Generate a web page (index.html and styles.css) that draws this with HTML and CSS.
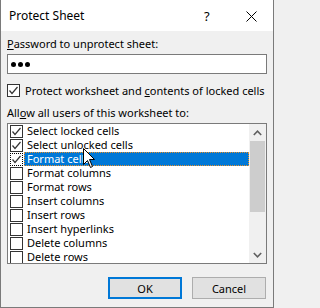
FILE: index.html
```html
<!DOCTYPE html>
<html>
<head>
<meta charset="utf-8">
<link rel="stylesheet" href="styles.css">
</head>
<body>
<div class="dialog">
  <div class="titlebar">
    <span class="title">Protect Sheet</span>
    <span class="help">?</span>
    <span class="close"><svg width="11" height="11" viewBox="0 0 11 11"><path d="M0.5 0.5 L10.5 10.5 M10.5 0.5 L0.5 10.5" stroke="#000" stroke-width="1" fill="none"/></svg></span>
  </div>
  <div class="body">
    <div class="label"><u>P</u>assword to unprotect sheet:</div>
    <div class="input"><span class="dot"></span><span class="dot"></span><span class="dot"></span></div>
    <div class="check-row">
      <span class="cb"><svg width="11" height="11" viewBox="0 0 11 11"><polyline points="1.5,5.5 4,8.5 9.5,2" stroke="#333" stroke-width="1.2" fill="none"/></svg></span>
      <span>Protect worksheet and <u>c</u>ontents of locked cells</span>
    </div>
    <div class="label label2">All<u>o</u>w all users of this worksheet to:</div>
    <div class="listbox">
      <div class="items">
        <div class="row"><span class="cb"><svg width="11" height="11" viewBox="0 0 11 11"><polyline points="1.5,5.5 4,8.5 9.5,2" stroke="#333" stroke-width="1.2" fill="none"/></svg></span><span class="text">Select locked cells</span></div>
        <div class="row"><span class="cb"><svg width="11" height="11" viewBox="0 0 11 11"><polyline points="1.5,5.5 4,8.5 9.5,2" stroke="#333" stroke-width="1.2" fill="none"/></svg></span><span class="text">Select unlocked cells</span></div>
        <div class="row selected"><span class="cb focus"><svg width="11" height="11" viewBox="0 0 11 11"><polyline points="1.5,5.5 4,8.5 9.5,2" stroke="#333" stroke-width="1.2" fill="none"/></svg></span><span class="text">Format cells</span></div>
        <div class="row"><span class="cb"></span><span class="text">Format columns</span></div>
        <div class="row"><span class="cb"></span><span class="text">Format rows</span></div>
        <div class="row"><span class="cb"></span><span class="text">Insert columns</span></div>
        <div class="row"><span class="cb"></span><span class="text">Insert rows</span></div>
        <div class="row"><span class="cb"></span><span class="text">Insert hyperlinks</span></div>
        <div class="row"><span class="cb"></span><span class="text">Delete columns</span></div>
        <div class="row"><span class="cb"></span><span class="text">Delete rows</span></div>
      </div>
      <div class="scrollbar">
        <div class="sb-btn"><svg width="9" height="6" viewBox="0 0 9 6"><polyline points="0.8,5 4.5,1.2 8.2,5" stroke="#606060" stroke-width="1.6" fill="none"/></svg></div>
        <div class="thumb"></div>
        <div class="track"></div>
        <div class="sb-btn"><svg width="9" height="6" viewBox="0 0 9 6"><polyline points="0.8,1 4.5,4.8 8.2,1" stroke="#606060" stroke-width="1.6" fill="none"/></svg></div>
      </div>
    </div>
    <div class="buttons">
      <button class="btn default">OK</button>
      <button class="btn">Cancel</button>
    </div>
  </div>
  <svg class="cursor" width="13" height="21" viewBox="0 0 13 21"><path d="M0.5 0.5 L0.5 16.5 L4.5 12.5 L7.5 19.5 L9.5 18.5 L6.5 11.5 L11.5 11.5 Z" fill="#fff" stroke="#000" stroke-width="1"/></svg>
</div>
</body>
</html>
```

FILE: styles.css
```css
html, body {
  margin: 0;
  padding: 0;
}
body {
  width: 274px;
  height: 308px;
  overflow: hidden;
  background: #f0f0f0;
  font-family: "Noto Sans", "Open Sans", sans-serif;
  font-size: 11px;
  color: #000;
  white-space: nowrap;
}
.dialog {
  position: relative;
  box-sizing: border-box;
  width: 274px;
  height: 308px;
  border-left: 1px solid #7a7a7a;
  border-right: 1px solid #7a7a7a;
  border-bottom: 1px solid #7a7a7a;
  background: #f0f0f0;
  display: flex;
  flex-direction: column;
}
.titlebar {
  height: 31px;
  background: #fff;
  display: flex;
  align-items: center;
  padding-left: 8px;
  flex: none;
}
.title {
  flex: 1;
  font-size: 12px;
}
.help {
  width: 12px;
  margin-right: 30px;
  font-size: 13px;
}
.close {
  display: flex;
  margin-right: 16px;
  margin-top: 1px;
}
.body {
  padding: 0 6px;
  display: flex;
  flex-direction: column;
}
.label {
  line-height: 15px;
  margin-top: 5px;
}
.label2 {
  margin-top: 7px;
}
.input {
  margin-top: 3px;
  height: 20px;
  box-sizing: border-box;
  border: 1px solid #7a7a7a;
  background: #fff;
  display: flex;
  align-items: center;
  gap: 2px;
  padding-left: 3px;
  padding-top: 1px;
}
.dot {
  width: 5px;
  height: 5px;
  border-radius: 50%;
  background: #000;
}
.check-row {
  margin-top: 9px;
  height: 15px;
  display: flex;
  align-items: center;
  gap: 5px;
}
.cb {
  width: 13px;
  height: 13px;
  box-sizing: border-box;
  border: 1px solid #333;
  background: #fff;
  display: flex;
  flex: none;
}
.cb.focus {
  border-style: dotted;
  border-color: #000;
}
.listbox {
  margin-top: 3px;
  height: 141px;
  box-sizing: border-box;
  border: 1px solid #7a7a7a;
  background: #fff;
  display: flex;
}
.items {
  flex: 1;
  overflow: hidden;
}
.row {
  height: 14px;
  display: flex;
  align-items: center;
  padding-left: 2px;
}
.row .text {
  margin-left: 1px;
  padding-left: 3px;
  line-height: 14px;
  height: 14px;
  flex: 1;
  box-sizing: border-box;
}
.row.selected .text {
  background: #0078d7;
  color: #fff;
  border: 1px dotted #e8902a;
  padding-left: 2px;
  line-height: 12px;
}
.scrollbar {
  width: 17px;
  background: #f0f0f0;
  display: flex;
  flex-direction: column;
  flex: none;
}
.sb-btn {
  height: 17px;
  display: flex;
  align-items: center;
  justify-content: center;
  flex: none;
}
.thumb {
  height: 71px;
  margin: 0 1px;
  background: #cdcdcd;
  flex: none;
}
.track {
  flex: 1;
}
.buttons {
  margin-top: 13px;
  display: flex;
  justify-content: flex-end;
  gap: 10px;
  padding-right: 1px;
}
.btn {
  width: 74px;
  height: 22px;
  box-sizing: border-box;
  border: 1px solid #adadad;
  background: #e1e1e1;
  font-family: "Noto Sans", "Open Sans", sans-serif;
  font-size: 11px;
  color: #000;
  padding: 0;
}
.btn.default {
  border: 2px solid #0078d7;
}
.cursor {
  position: absolute;
  left: 82px;
  top: 148px;
}
```
